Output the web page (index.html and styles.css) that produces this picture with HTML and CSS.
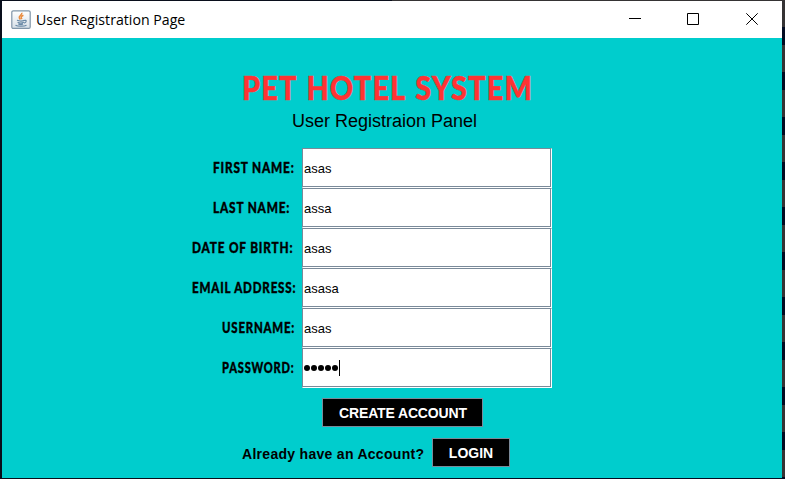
FILE: index.html
```html
<!DOCTYPE html>
<html lang="en">
<head>
<meta charset="utf-8">
<title>User Registration Page</title>
<link rel="stylesheet" href="styles.css">
</head>
<body>
<div class="window">
  <header class="titlebar">
    <svg class="app-icon" width="20" height="20" viewBox="0 0 20 20">
      <defs><linearGradient id="g" x1="0" y1="0" x2="0" y2="1"><stop offset="0" stop-color="#fff"/><stop offset="1" stop-color="#d5dfe7"/></linearGradient></defs>
      <rect x=".8" y=".8" width="18.4" height="17.6" rx="1.5" fill="url(#g)" stroke="#8095a8" stroke-width="1.2"/>
      <path d="M10.8 2.7c.8 2.1-3.6 3-2.5 5.2l1.1 1.6M12.4 5.3c-3 1.2-2.6 2.1-1.4 3.7" fill="none" stroke="#e98b3d" stroke-width="1.5"/>
      <path d="M6 10.3c2 .8 5.7.8 7.5 0M6.6 12.2c1.7.9 4.6.9 6.2 0M7.3 14c1.5.6 3.4.6 4.8 0M13.4 10.5c2.3-.8 2.6 1.6-.2 2.6M4.5 15.2c2.4 1.4 8.8 1.3 11 0" fill="none" stroke="#6888a5" stroke-width="1.2"/>
    </svg>
    <h1 class="window-title">User Registration Page</h1>
    <svg class="controls" width="130" height="13" viewBox="0 0 130 13" fill="none" stroke="#000">
      <path d="M0 5.5h12M58.500 .5h11v11h-11z"/>
      <path d="M117.300 .3l11.400 11.400M128.700 .3l-11.400 11.400"/>
    </svg>
  </header>
  <main class="panel">
    <h2 class="brand">PET HOTEL SYSTEM</h2>
    <p class="subtitle">User Registraion Panel</p>
    <form class="form">
      <div class="row"><label class="label first">FIRST NAME:</label><div class="field">asas</div></div>
      <div class="row"><label class="label last">LAST NAME:</label><div class="field">assa</div></div>
      <div class="row"><label class="label birth">DATE OF BIRTH:</label><div class="field">asas</div></div>
      <div class="row"><label class="label email">EMAIL ADDRESS:</label><div class="field">asasa</div></div>
      <div class="row"><label class="label user">USERNAME:</label><div class="field">asas</div></div>
      <div class="row"><label class="label pass">PASSWORD:</label><div class="field password"><i class="dot"></i><i class="dot"></i><i class="dot"></i><i class="dot"></i><i class="dot"></i><i class="caret"></i></div></div>
    </form>
    <button class="button create">CREATE ACCOUNT</button>
    <div class="login-row"><span class="question">Already have an Account?</span><button class="button login">LOGIN</button></div>
  </main>
</div>
</body>
</html>
```
FILE: styles.css
```css
* { box-sizing: border-box; }
body {
  margin: 0;
  height: 479px;
  padding: 1px 3px 1px 2px;
  overflow: hidden;
  background: linear-gradient(90deg, #090e1b 50%, transparent 50%),
    repeating-linear-gradient(#353334 0 9px, #353334 9px 27px, #020b22 27px 45px);
  font-family: "Liberation Sans", sans-serif;
  color: #000;
}
.window { height: 477px; background: #00cdcd; }
.titlebar {
  height: 37px;
  background: #fff;
  display: flex;
  align-items: center;
  padding: 0 23px 0 9px;
}
.app-icon { flex: none; }
.window-title {
  margin: -2px auto 0 5px;
  font: 400 15px/20px "Open Sans", sans-serif;
  transform: scaleX(.943);
  transform-origin: left;
  white-space: nowrap;
}
.panel { padding-top: 28px; }
.brand {
  margin: 0 0 0 240px;
  height: 42px;
  width: max-content;
  font: 900 33px/42px Lato, sans-serif;
  letter-spacing: 1.3px;
  word-spacing: 2px;
  color: #ff3333;
  -webkit-text-stroke: .5px #ff3333;
  transform: scaleX(.875);
  transform-origin: left;
}
.subtitle { margin: 1px 0 0 290px; font-size: 18px; line-height: 24px; }
.form { margin: 15px 0 0 190px; }
.row { display: flex; height: 40px; }
.label {
  width: 110px;
  font: 900 15.500px/39px Lato, sans-serif;
  letter-spacing: 1.1px;
  white-space: nowrap;
  -webkit-text-stroke: .4px #000;
  transform: scaleX(.76);
  transform-origin: left;
}
.first, .last { margin-left: 20.500px; width: 89.500px; }
.email { transform: scaleX(.745); }
.user, .pass { margin-left: 30px; width: 80px; }
.user { transform: scaleX(.735); }
.pass { transform: scaleX(.715); }
.field {
  width: 250px;
  height: 40px;
  padding: 0 1px;
  background: #fff;
  border: 1px solid #7a8a99;
  border-right-color: #fff;
  border-bottom-color: #fff;
  box-shadow: inset -1px -1px #7a8a99, inset 1px 1px #fff;
  font-size: 13px;
  line-height: 40px;
}
.password { display: flex; align-items: center; }
.dot { width: 6px; height: 6px; border-radius: 50%; background: #000; margin-right: 1px; }
.caret { width: 1px; height: 16px; background: #000; }
.button {
  display: block;
  height: 29px;
  padding: 2px 0 0;
  background: #000;
  border: 1px solid #7a8a99;
  color: #fff;
  font: bold 14px/25px "Liberation Sans", sans-serif;
}
.create { width: 161px; margin: 10px 0 0 320px; padding-left: 1px; letter-spacing: -.15px; }
.login-row { display: flex; margin: 11px 0 0 240px; }
.question { width: 190px; font: bold 14px/33px "Liberation Sans", sans-serif; letter-spacing: .29px; height: 29px; }
.login { width: 78px; }
```
